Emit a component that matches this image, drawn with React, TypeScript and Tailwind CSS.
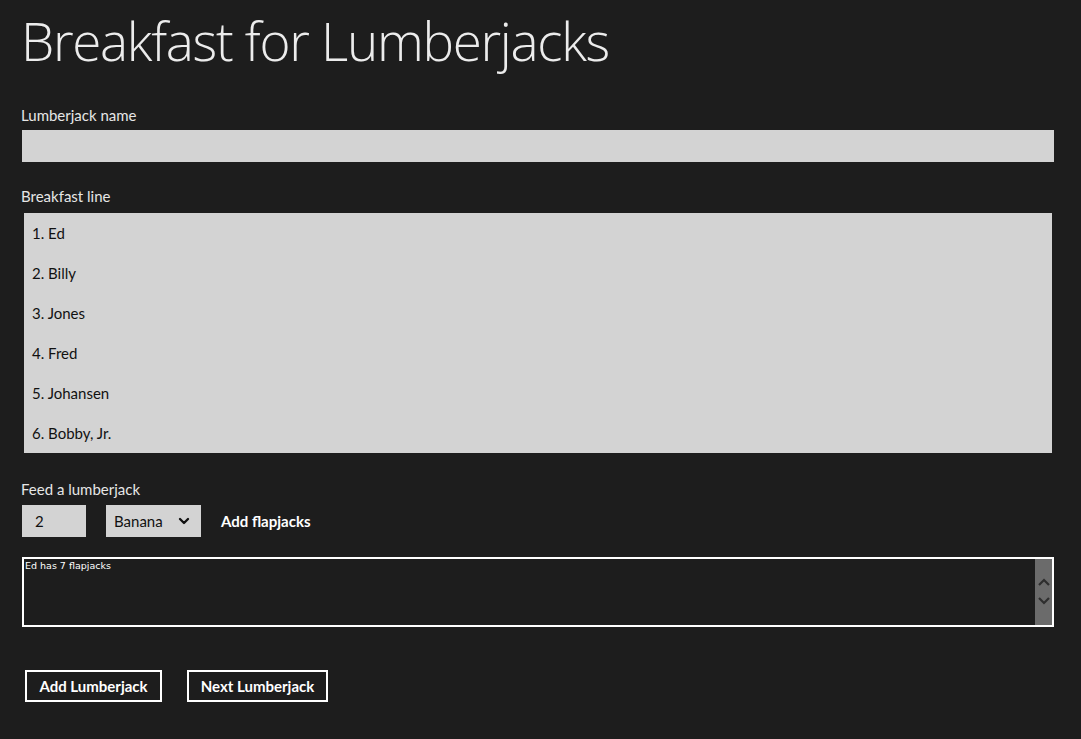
import { ChevronDown } from "lucide-react"

const line = ["1. Ed", "2. Billy", "3. Jones", "4. Fred", "5. Johansen", "6. Bobby, Jr."]

function Label({ children }: { children: string }) {
  return <div className="text-[15px] leading-5 text-[#e6e6e6]">{children}</div>
}

export default function App() {
  return (
    <main className="min-h-[739px] bg-[#1d1d1d] font-['Lato',sans-serif] text-white">
      <div className="flex flex-col pl-[21px] pr-[27px] pt-[1px]">
        <h1 className="font-['Open_Sans',sans-serif] text-[53px] font-light leading-[79px] tracking-[-1.3px] text-[#ececec]">
          Breakfast for Lumberjacks
        </h1>

        <div className="mt-[25px]">
          <Label>Lumberjack name</Label>
          <div className="ml-px mt-[5px] h-[32px] bg-[#d3d3d3]" />
        </div>

        <div className="mt-[24px]">
          <Label>Breakfast line</Label>
          <ul className="ml-[3px] mr-[2px] mt-[7px] flex h-[240px] flex-col bg-[#d3d3d3] pl-[8px]">
            {line.map((n) => (
              <li key={n} className="flex h-[40px] shrink-0 items-center text-[15px] text-[#111]">
                {n}
              </li>
            ))}
          </ul>
        </div>

        <div className="mt-[26px]">
          <Label>Feed a lumberjack</Label>
          <div className="ml-px mt-[6px] flex items-center">
            <div className="flex h-[32px] w-[64px] items-center bg-[#d3d3d3] pl-[13px] text-[15px] text-[#111]">2</div>
            <div className="ml-[20px] flex h-[32px] w-[95px] items-center justify-between bg-[#d3d3d3] pl-[8px] pr-[9px] text-[15px] text-[#111]">
              <span>Banana</span>
              <ChevronDown className="h-[16px] w-[16px]" strokeWidth={3.5} />
            </div>
            <button className="ml-[20px] text-[15px] font-bold text-white">Add flapjacks</button>
          </div>
        </div>

        <div className="ml-px mt-[20px] flex h-[70px] border-2 border-white">
          <div className="flex-1 pl-[1px] pt-[1px] font-['DejaVu_Sans',sans-serif] text-[9.5px] leading-3 text-white">
            Ed has 7 flapjacks
          </div>
          <div className="flex w-[17px] flex-col items-center justify-center gap-[11px] bg-[#6b6b6b] pb-[2px] text-[#2e2e2e]">
            <svg width="12" height="8" viewBox="0 0 12 8" fill="none" stroke="currentColor" strokeWidth="2.2">
              <path d="M1 7 L6 2 L11 7" />
            </svg>
            <svg width="12" height="8" viewBox="0 0 12 8" fill="none" stroke="currentColor" strokeWidth="2.2">
              <path d="M1 1 L6 6 L11 1" />
            </svg>
          </div>
        </div>

        <div className="ml-[4px] mt-[43px] flex gap-[25px]">
          <button className="h-[32px] w-[137px] border-2 border-white text-[15px] font-bold text-white">
            Add Lumberjack
          </button>
          <button className="h-[32px] w-[141px] border-2 border-white text-[15px] font-bold text-white">
            Next Lumberjack
          </button>
        </div>
      </div>
    </main>
  )
}
